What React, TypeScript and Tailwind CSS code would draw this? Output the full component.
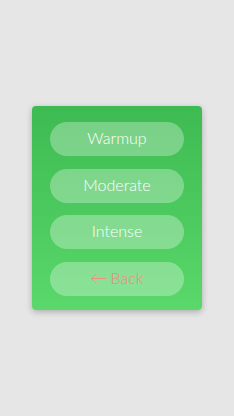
import React from "react";

export default function App() {
  const items = ["Warmup", "Moderate", "Intense"];
  return (
    <div className="w-[234px] h-[416px] bg-[#e6e6e6] flex items-start justify-center pt-[106px]" style={{ fontFamily: "Lato, 'Open Sans', sans-serif" }}>
      <div className="w-[170px] h-[204px] rounded-[4px] bg-gradient-to-b from-[#3dba51] to-[#5ad86b] shadow-[0_2px_6px_rgba(0,0,0,0.25)] flex flex-col items-center pt-[16px] gap-[12.5px]">
        {items.map((t) => (
          <button key={t} className="w-[134px] h-[34px] rounded-full bg-white/30 text-white text-[16px] font-light leading-none flex items-center justify-center pb-[2px]">
            {t}
          </button>
        ))}
        <button className="w-[134px] h-[34px] rounded-full bg-white/30 text-[#ff7f7f] text-[16px] font-light leading-none flex items-center justify-center pb-[2px]">
          <span className="text-[17px] mr-[3px]">←</span>Back
        </button>
      </div>
    </div>
  );
}
